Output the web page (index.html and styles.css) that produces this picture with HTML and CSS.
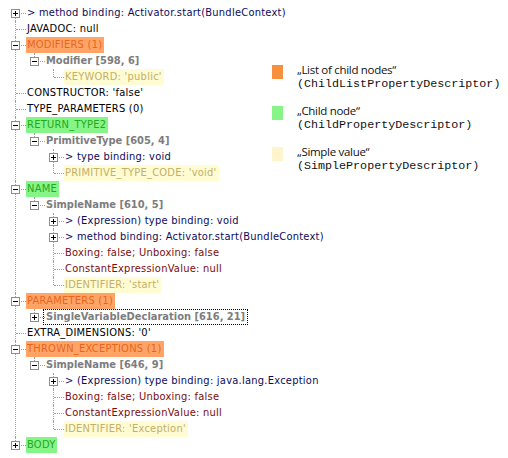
FILE: index.html
```html
<!DOCTYPE html>
<html>
<head>
<meta charset="utf-8">
<link rel="stylesheet" href="styles.css">
</head>
<body>
<div class="page">
  <ul class="tree">
    <li><div class="row"><svg class="tg" width="9" height="9"><rect x="0.5" y="0.5" width="8" height="8" fill="#fff" stroke="#8e8e8e"/><path d="M2 4.5h5M4.5 2v5" stroke="#000"/></svg><span class="lbl bind">&gt; method binding: Activator.start(BundleContext)</span></div></li>
    <li><div class="row"><span class="sp"></span><span class="lbl">JAVADOC: null</span></div></li>
    <li><div class="row"><svg class="tg" width="9" height="9"><rect x="0.5" y="0.5" width="8" height="8" fill="#fff" stroke="#8e8e8e"/><path d="M2 4.5h5" stroke="#000"/></svg><span class="lbl list">MODIFIERS (1)</span></div>
      <ul>
        <li><div class="row"><svg class="tg" width="9" height="9"><rect x="0.5" y="0.5" width="8" height="8" fill="#fff" stroke="#8e8e8e"/><path d="M2 4.5h5" stroke="#000"/></svg><span class="lbl node">Modifier [598, 6]</span></div>
          <ul>
            <li><div class="row"><span class="sp"></span><span class="lbl simple">KEYWORD: 'public'</span></div></li>
          </ul>
        </li>
      </ul>
    </li>
    <li><div class="row"><span class="sp"></span><span class="lbl">CONSTRUCTOR: 'false'</span></div></li>
    <li><div class="row"><span class="sp"></span><span class="lbl">TYPE_PARAMETERS (0)</span></div></li>
    <li><div class="row"><svg class="tg" width="9" height="9"><rect x="0.5" y="0.5" width="8" height="8" fill="#fff" stroke="#8e8e8e"/><path d="M2 4.5h5" stroke="#000"/></svg><span class="lbl child">RETURN_TYPE2</span></div>
      <ul>
        <li><div class="row"><svg class="tg" width="9" height="9"><rect x="0.5" y="0.5" width="8" height="8" fill="#fff" stroke="#8e8e8e"/><path d="M2 4.5h5" stroke="#000"/></svg><span class="lbl node">PrimitiveType [605, 4]</span></div>
          <ul>
            <li><div class="row"><svg class="tg" width="9" height="9"><rect x="0.5" y="0.5" width="8" height="8" fill="#fff" stroke="#8e8e8e"/><path d="M2 4.5h5M4.5 2v5" stroke="#000"/></svg><span class="lbl bind">&gt; type binding: void</span></div></li>
            <li><div class="row"><span class="sp"></span><span class="lbl simple">PRIMITIVE_TYPE_CODE: 'void'</span></div></li>
          </ul>
        </li>
      </ul>
    </li>
    <li><div class="row"><svg class="tg" width="9" height="9"><rect x="0.5" y="0.5" width="8" height="8" fill="#fff" stroke="#8e8e8e"/><path d="M2 4.5h5" stroke="#000"/></svg><span class="lbl child">NAME</span></div>
      <ul>
        <li><div class="row"><svg class="tg" width="9" height="9"><rect x="0.5" y="0.5" width="8" height="8" fill="#fff" stroke="#8e8e8e"/><path d="M2 4.5h5" stroke="#000"/></svg><span class="lbl node">SimpleName [610, 5]</span></div>
          <ul>
            <li><div class="row"><svg class="tg" width="9" height="9"><rect x="0.5" y="0.5" width="8" height="8" fill="#fff" stroke="#8e8e8e"/><path d="M2 4.5h5M4.5 2v5" stroke="#000"/></svg><span class="lbl bind">&gt; (Expression) type binding: void</span></div></li>
            <li><div class="row"><svg class="tg" width="9" height="9"><rect x="0.5" y="0.5" width="8" height="8" fill="#fff" stroke="#8e8e8e"/><path d="M2 4.5h5M4.5 2v5" stroke="#000"/></svg><span class="lbl bind">&gt; method binding: Activator.start(BundleContext)</span></div></li>
            <li><div class="row"><span class="sp"></span><span class="lbl flag">Boxing: false; Unboxing: false</span></div></li>
            <li><div class="row"><span class="sp"></span><span class="lbl flag">ConstantExpressionValue: null</span></div></li>
            <li><div class="row"><span class="sp"></span><span class="lbl simple">IDENTIFIER: 'start'</span></div></li>
          </ul>
        </li>
      </ul>
    </li>
    <li><div class="row"><svg class="tg" width="9" height="9"><rect x="0.5" y="0.5" width="8" height="8" fill="#fff" stroke="#8e8e8e"/><path d="M2 4.5h5" stroke="#000"/></svg><span class="lbl list">PARAMETERS (1)</span></div>
      <ul>
        <li><div class="row"><svg class="tg" width="9" height="9"><rect x="0.5" y="0.5" width="8" height="8" fill="#fff" stroke="#8e8e8e"/><path d="M2 4.5h5M4.5 2v5" stroke="#000"/></svg><span class="lbl node focus">SingleVariableDeclaration [616, 21]</span></div></li>
      </ul>
    </li>
    <li><div class="row"><span class="sp"></span><span class="lbl">EXTRA_DIMENSIONS: '0'</span></div></li>
    <li><div class="row"><svg class="tg" width="9" height="9"><rect x="0.5" y="0.5" width="8" height="8" fill="#fff" stroke="#8e8e8e"/><path d="M2 4.5h5" stroke="#000"/></svg><span class="lbl list">THROWN_EXCEPTIONS (1)</span></div>
      <ul>
        <li><div class="row"><svg class="tg" width="9" height="9"><rect x="0.5" y="0.5" width="8" height="8" fill="#fff" stroke="#8e8e8e"/><path d="M2 4.5h5" stroke="#000"/></svg><span class="lbl node">SimpleName [646, 9]</span></div>
          <ul>
            <li><div class="row"><svg class="tg" width="9" height="9"><rect x="0.5" y="0.5" width="8" height="8" fill="#fff" stroke="#8e8e8e"/><path d="M2 4.5h5M4.5 2v5" stroke="#000"/></svg><span class="lbl bind">&gt; (Expression) type binding: java.lang.Exception</span></div></li>
            <li><div class="row"><span class="sp"></span><span class="lbl flag">Boxing: false; Unboxing: false</span></div></li>
            <li><div class="row"><span class="sp"></span><span class="lbl flag">ConstantExpressionValue: null</span></div></li>
            <li><div class="row"><span class="sp"></span><span class="lbl simple">IDENTIFIER: 'Exception'</span></div></li>
          </ul>
        </li>
      </ul>
    </li>
    <li><div class="row"><svg class="tg" width="9" height="9"><rect x="0.5" y="0.5" width="8" height="8" fill="#fff" stroke="#8e8e8e"/><path d="M2 4.5h5M4.5 2v5" stroke="#000"/></svg><span class="lbl child">BODY</span></div></li>
  </ul>

  <div class="legend">
    <div class="item">
      <span class="swatch sw-list"></span>
      <div class="desc"><div class="title">„List of child nodes“</div><div class="code">(ChildListPropertyDescriptor)</div></div>
    </div>
    <div class="item">
      <span class="swatch sw-child"></span>
      <div class="desc"><div class="title">„Child node“</div><div class="code">(ChildPropertyDescriptor)</div></div>
    </div>
    <div class="item">
      <span class="swatch sw-simple"></span>
      <div class="desc"><div class="title">„Simple value“</div><div class="code">(SimplePropertyDescriptor)</div></div>
    </div>
  </div>
</div>
</body>
</html>
```

FILE: styles.css
```css
html, body {
  margin: 0;
  padding: 0;
  background: #fff;
}

.page {
  display: flex;
  width: 508px;
  height: 458px;
  overflow: hidden;
}

.tree, .tree ul {
  list-style: none;
  margin: 0;
  padding: 0;
}

.tree {
  flex: 0 0 265px;
  min-width: 0;
  padding: 5px 0 0 6px;
  font-family: "DejaVu Sans Condensed", "DejaVu Sans", sans-serif;
  font-size: 11px;
  letter-spacing: 0.25px;
  color: #000;
  white-space: nowrap;
}

.tree ul {
  padding-left: 19px;
}

.tree li {
  position: relative;
}

/* vertical connector */
.tree li::before {
  content: "";
  position: absolute;
  left: 9px;
  top: 0;
  bottom: 0;
  border-left: 1px dotted #a0a0a0;
}

.tree li:last-child::before {
  bottom: auto;
  height: 8px;
}

.tree > li:first-child::before {
  top: 8px;
}

/* horizontal connector */
.tree li::after {
  content: "";
  position: absolute;
  left: 10px;
  top: 8px;
  width: 10px;
  border-top: 1px dotted #a0a0a0;
}

.row {
  display: flex;
  align-items: center;
  height: 16px;
}

.tg {
  position: relative;
  z-index: 1;
  flex: 0 0 9px;
  margin: 0 6px 0 5px;
  display: block;
}

.sp {
  flex: 0 0 20px;
}

.lbl {
  position: relative;
  z-index: 1;
  height: 16px;
  line-height: 16px;
  padding: 0 2px 0 1px;
}

.bind { color: #0c0c5c; }

.node {
  font-weight: bold;
  letter-spacing: 0;
  color: #7d7d7d;
}

.flag { color: #7a0d0d; }

.list {
  background: #ffa466;
  color: #e8641c;
}

.child {
  background: #86f486;
  color: #22a822;
}

.simple {
  background: #fffbd2;
  color: #c2b06a;
}

.focus {
  outline: 1px dotted #000;
  outline-offset: -1px;
  padding: 0 3px 0 3px;
  margin-left: -2px;
}

.legend {
  display: flex;
  flex-direction: column;
  gap: 12px;
  margin-top: 62px;
  margin-left: 1px;
}

.item {
  display: flex;
  align-items: flex-start;
}

.swatch {
  flex: 0 0 11px;
  height: 14px;
  margin: 3px 14px 0 0;
}

.sw-list { background: #f7903c; }
.sw-child { background: #86f486; }
.sw-simple { background: #fff5cc; }

.title {
  font-family: "Open Sans", sans-serif;
  font-size: 11.5px;
  letter-spacing: -0.3px;
  line-height: 15px;
  color: #111;
}

.code {
  font-family: "Liberation Mono", monospace;
  font-size: 11.7px;
  line-height: 14px;
  color: #111;
}
```
